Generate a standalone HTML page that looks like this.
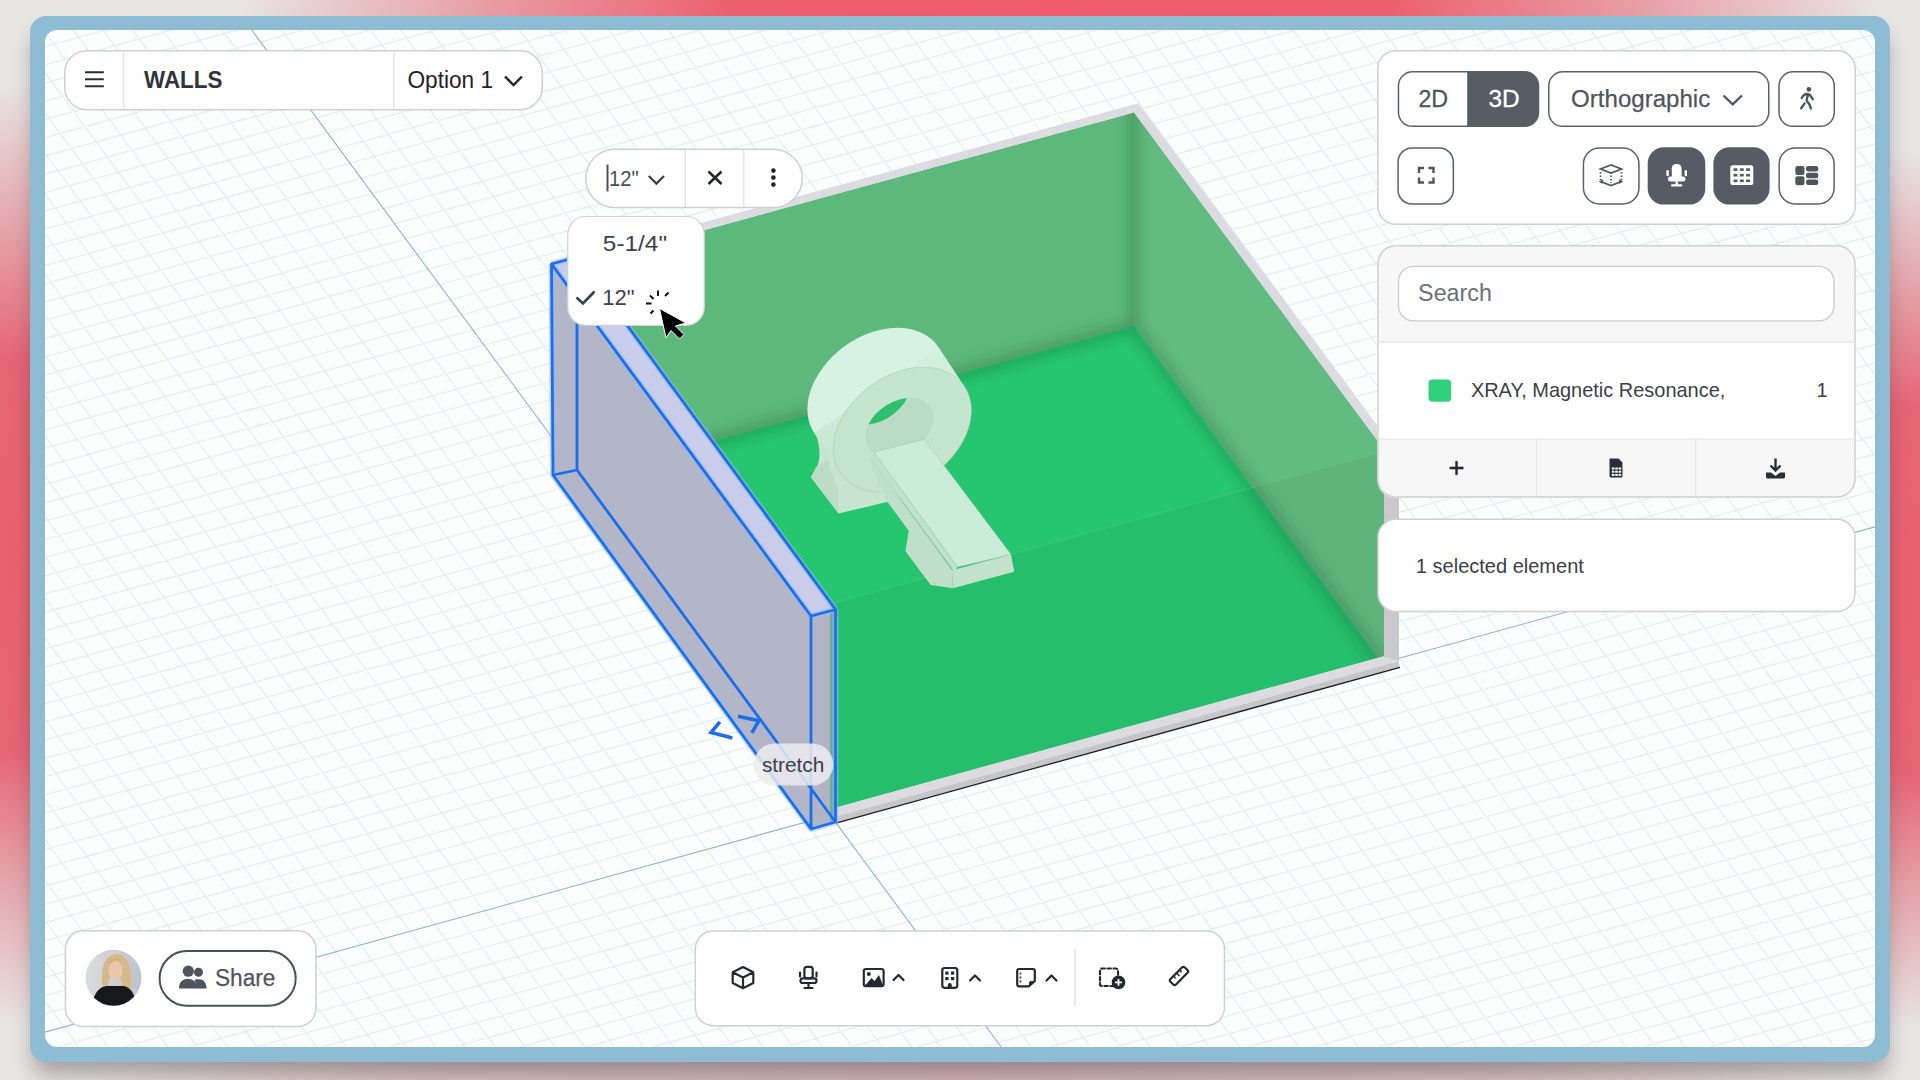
<!DOCTYPE html>
<html><head><meta charset="utf-8">
<style>
*{box-sizing:border-box;margin:0;padding:0}
html,body{width:1920px;height:1080px;overflow:hidden}
body{font-family:"Liberation Sans",sans-serif;position:relative;
background:radial-gradient(ellipse 820px 320px at 1060px 0px, #ef5b6c 0%, #ec606f 40%, #e8a2a9 72%, rgba(232,229,227,0) 100%),radial-gradient(ellipse 270px 470px at 0px 555px, #e9606f 0%, #e76676 42%, #e5a6ac 70%, rgba(232,229,227,0) 100%),radial-gradient(ellipse 260px 440px at 1920px 590px, #e9606f 0%, #e76676 42%, #e5a6ac 70%, rgba(232,229,227,0) 100%),radial-gradient(ellipse 900px 160px at 960px 1080px, #d6b8ba 0%, #dac6c6 60%, rgba(232,229,227,0) 100%),#e8e5e3;}
.frame{position:absolute;left:30px;top:16px;width:1860px;height:1046px;border-radius:16px;background:#8ebcd3;
box-shadow:0 16px 22px -4px rgba(30,20,20,.34)}
.inner{position:absolute;left:45px;top:30px;width:1830px;height:1017px;border-radius:12px;background:#fcfefe;overflow:hidden}
svg.scene{position:absolute;left:0;top:0}
.panel{position:absolute;background:#fff;border:1.5px solid #d2d2d2;border-radius:18px}
.txt{position:absolute;white-space:nowrap;line-height:1}
</style></head><body>
<div class="frame"></div>
<div class="inner"></div>
<svg class="scene" width="1920" height="1080" viewBox="0 0 1920 1080">
<defs>
<clipPath id="clipIn"><rect x="45" y="30" width="1830" height="1017" rx="12"/></clipPath>
</defs>
<g clip-path="url(#clipIn)">
<path d="M45 46.6L105.3 30M45 64.9L171.4 30M45 83.1L237.4 30M45 101.4L303.5 30M45 119.6L369.6 30M45 137.9L435.7 30M45 156.1L501.8 30M45 174.4L567.9 30M45 192.6L634.0 30M45 210.9L700.1 30M45 229.1L766.2 30M45 247.4L832.3 30M45 265.6L898.4 30M45 283.9L964.5 30M45 302.1L1030.6 30M45 320.4L1096.7 30M45 338.6L1162.8 30M45 356.9L1228.9 30M45 375.1L1295.0 30M45 393.4L1361.1 30M45 411.6L1427.2 30M45 429.9L1493.3 30M45 448.1L1559.4 30M45 466.4L1625.5 30M45 484.6L1691.6 30M45 502.9L1757.7 30M45 521.1L1823.8 30M45 539.4L1875 34.1M45 557.6L1875 52.4M45 575.9L1875 70.6M45 594.1L1875 88.9M45 612.4L1875 107.1M45 630.6L1875 125.4M45 648.9L1875 143.6M45 667.1L1875 161.9M45 685.4L1875 180.1M45 703.6L1875 198.4M45 721.9L1875 216.6M45 740.1L1875 234.9M45 758.4L1875 253.1M45 776.6L1875 271.4M45 794.9L1875 289.6M45 813.1L1875 307.9M45 831.4L1875 326.1M45 849.6L1875 344.4M45 867.9L1875 362.6M45 886.1L1875 380.9M45 904.4L1875 399.1M45 922.6L1875 417.4M45 940.9L1875 435.6M45 959.1L1875 453.9M45 977.4L1875 472.1M45 995.6L1875 490.4M45 1013.9L1875 508.6M57.3 1047L1875 545.1M123.4 1047L1875 563.4M189.5 1047L1875 581.6M255.6 1047L1875 599.9M321.7 1047L1875 618.1M387.8 1047L1875 636.4M453.9 1047L1875 654.6M520.0 1047L1875 672.9M586.1 1047L1875 691.1M652.2 1047L1875 709.4M718.3 1047L1875 727.6M784.4 1047L1875 745.9M850.5 1047L1875 764.1M916.6 1047L1875 782.4M982.7 1047L1875 800.6M1048.7 1047L1875 818.9M1114.8 1047L1875 837.1M1180.9 1047L1875 855.4M1247.0 1047L1875 873.6M1313.1 1047L1875 891.9M1379.2 1047L1875 910.1M1445.3 1047L1875 928.4M1511.4 1047L1875 946.6M1577.5 1047L1875 964.9M1643.6 1047L1875 983.1M1709.7 1047L1875 1001.4M1775.8 1047L1875 1019.6M1841.9 1047L1875 1037.9M45 1041.7L48.9 1047M45 1001.3L78.7 1047M45 961.0L108.4 1047M45 920.6L138.2 1047M45 880.2L167.9 1047M45 839.8L197.7 1047M45 799.4L227.5 1047M45 759.0L257.2 1047M45 718.6L287.0 1047M45 678.3L316.7 1047M45 637.9L346.5 1047M45 597.5L376.3 1047M45 557.1L406.0 1047M45 516.7L435.8 1047M45 476.3L465.5 1047M45 436.0L495.3 1047M45 395.6L525.1 1047M45 355.2L554.8 1047M45 314.8L584.6 1047M45 274.4L614.3 1047M45 234.0L644.1 1047M45 193.7L673.9 1047M45 153.3L703.6 1047M45 112.9L733.4 1047M45 72.5L763.1 1047M45 32.1L792.9 1047M73.2 30L822.7 1047M103.0 30L852.4 1047M132.7 30L882.2 1047M162.5 30L911.9 1047M192.2 30L941.7 1047M222.0 30L971.5 1047M281.5 30L1031.0 1047M311.3 30L1060.7 1047M341.0 30L1090.5 1047M370.8 30L1120.3 1047M400.6 30L1150.0 1047M430.3 30L1179.8 1047M460.1 30L1209.5 1047M489.8 30L1239.3 1047M519.6 30L1269.1 1047M549.4 30L1298.8 1047M579.1 30L1328.6 1047M608.9 30L1358.3 1047M638.6 30L1388.1 1047M668.4 30L1417.9 1047M698.2 30L1447.6 1047M727.9 30L1477.4 1047M757.7 30L1507.1 1047M787.4 30L1536.9 1047M817.2 30L1566.7 1047M847.0 30L1596.4 1047M876.7 30L1626.2 1047M906.5 30L1655.9 1047M936.2 30L1685.7 1047M966.0 30L1715.5 1047M995.8 30L1745.2 1047M1025.5 30L1775.0 1047M1055.3 30L1804.7 1047M1085.0 30L1834.5 1047M1114.8 30L1864.3 1047M1144.6 30L1875 1021.2M1174.3 30L1875 980.8M1204.1 30L1875 940.4M1233.8 30L1875 900.0M1263.6 30L1875 859.7M1293.4 30L1875 819.3M1323.1 30L1875 778.9M1352.9 30L1875 738.5M1382.6 30L1875 698.1M1412.4 30L1875 657.7M1442.2 30L1875 617.4M1471.9 30L1875 577.0M1501.7 30L1875 536.6M1531.4 30L1875 496.2M1561.2 30L1875 455.8M1591.0 30L1875 415.4M1620.7 30L1875 375.1M1650.5 30L1875 334.7M1680.2 30L1875 294.3M1710.0 30L1875 253.9M1739.8 30L1875 213.5M1769.5 30L1875 173.1M1799.3 30L1875 132.7M1829.0 30L1875 92.4M1858.8 30L1875 52.0" stroke="#e7f0f0" stroke-width="1.5" fill="none"/>
<path d="M45 1032.1L1875 526.9M251.8 30L1001.2 1047" stroke="#93b3bd" stroke-width="1.1" fill="none"/>
</g>

<defs>
<filter id="aoBlur" x="-20%" y="-20%" width="140%" height="140%"><feGaussianBlur stdDeviation="7"/></filter><filter id="aoBlur2" x="-50%" y="-20%" width="200%" height="140%"><feGaussianBlur stdDeviation="16"/></filter>
<clipPath id="interiorClip"><polygon points="582,263.7 1133.9,112.4 1384,449.8 1384,666.3 836,818 577,470"/></clipPath>
<linearGradient id="gBack" x1="582" y1="0" x2="1134" y2="0" gradientUnits="userSpaceOnUse">
<stop offset="0" stop-color="#5fb97d"/><stop offset="0.8" stop-color="#5db77b"/><stop offset="0.97" stop-color="#4fa46c"/><stop offset="1" stop-color="#56ad72"/>
</linearGradient>
<linearGradient id="gBackV" x1="0" y1="112" x2="0" y2="326" gradientUnits="userSpaceOnUse">
<stop offset="0" stop-color="#000" stop-opacity="0"/><stop offset="0.75" stop-color="#000" stop-opacity="0"/><stop offset="1" stop-color="#103020" stop-opacity="0.10"/>
</linearGradient>
<linearGradient id="gRight" x1="1134" y1="0" x2="1384" y2="0" gradientUnits="userSpaceOnUse">
<stop offset="0" stop-color="#54aa70"/><stop offset="0.08" stop-color="#5fb77d"/><stop offset="1" stop-color="#63bb80"/>
</linearGradient>
<linearGradient id="gFloor" x1="0" y1="326" x2="0" y2="820" gradientUnits="userSpaceOnUse">
<stop offset="0" stop-color="#23bb67"/><stop offset="0.12" stop-color="#27c771"/><stop offset="1" stop-color="#22c06a"/>
</linearGradient>
</defs>
<g clip-path="url(#clipIn)">
<!-- floor -->
<polygon points="577,300 1133.9,112 1384,449 1386,660 836,812 577,470" fill="#26c670"/>
<!-- back-left wall inner face -->
<polygon points="582,263.7 1133.9,112.4 1133.9,326 582,477.2" fill="#5db87b"/>
<!-- right wall inner face -->
<polygon points="1133.9,112.4 1384,449.8 1384,666.3 1133.9,326" fill="#62bb80"/>
<!-- AO -->
<g clip-path="url(#interiorClip)" filter="url(#aoBlur)">
<path d="M1133.9,100 L1133.9,326 M560,483 L1133.9,326 L1384,666" stroke="#0e3a1e" stroke-opacity="0.30" stroke-width="9" fill="none"/>
</g>
<g clip-path="url(#interiorClip)" filter="url(#aoBlur2)">
<path d="M1133.9,100 L1133.9,326" stroke="#0e3a1e" stroke-opacity="0.16" stroke-width="30" fill="none"/>
</g>
<!-- front transparent wall tint -->
<polygon points="836,602.5 1384,451.3 1384,666.3 836,818" fill="#2a4a30" fill-opacity="0.06"/>
<line x1="836" y1="602.5" x2="1384" y2="451.3" stroke="#6fd08f" stroke-opacity="0.3" stroke-width="1.2"/>
<!-- wall tops -->
<polygon points="551.5,264 1138.3,103.3 1133.9,112.4 582,263.7" fill="#dcdbe1"/>
<polygon points="1138.3,103.3 1399,455 1384,449.8 1133.9,112.4" fill="#dcdbe1"/>
<!-- right wall end face -->
<polygon points="1384,449.8 1399,455 1399,661.5 1384,656.3" fill="#c9c8cc"/>
<!-- floor slab -->
<polygon points="836,807.4 1383.7,656.3 1398.5,661.5 1400,667.4 836,823.1" fill="#c6c6c9"/>
<polygon points="836,807.4 1383.7,656.3 1398.5,661.5 836,816.8" fill="#dcdce0"/>
<line x1="836" y1="823.1" x2="1400" y2="667.4" stroke="#1e1e1e" stroke-width="1.3"/>
</g>

<defs>
<linearGradient id="gRing" x1="0" y1="330" x2="0" y2="500" gradientUnits="userSpaceOnUse">
<stop offset="0" stop-color="#d6f2e0"/><stop offset="0.5" stop-color="#cdebd6"/><stop offset="1" stop-color="#c2e2cb"/>
</linearGradient>
<clipPath id="holeClip"><ellipse cx="0" cy="0" rx="1" ry="1" transform="matrix(34.2,-9.45,0,28,899.6,427.4)"/></clipPath>
</defs>
<g id="mri">
<!-- base -->
<path d="M815,432 C820,444 821,458 817,467 L811,477.2 L838.6,513.5 L888.2,501.7 L900,497 L885,470 L840,440 Z" fill="#c7e5d0"/>
<path d="M811,477.2 L838.6,513.5 L839,490 C834,480 830,470 828,460 L816,467 Z" fill="#bddcc6"/>
<!-- ring side (hull) -->
<ellipse cx="0" cy="0" rx="1" ry="1" transform="matrix(69,-19.04,0,59.4,876.4,390.2)" fill="url(#gRing)"/>
<polygon points="840.2,472.5 964.6,386.7 938.6,347.3 814.2,433.1" fill="url(#gRing)"/>
<!-- front face -->
<ellipse cx="0" cy="0" rx="1" ry="1" transform="matrix(69,-19.04,0,59.4,902.4,429.6)" fill="#c6e5cf"/>
<ellipse cx="0" cy="0" rx="1" ry="1" transform="matrix(69,-19.04,0,59.4,902.4,429.6)" fill="none" stroke="#a9c9b3" stroke-width="1" vector-effect="non-scaling-stroke" stroke-opacity="0.6"/>
<!-- hole -->
<ellipse cx="0" cy="0" rx="1" ry="1" transform="matrix(34.2,-9.45,0,28,899.6,427.4)" fill="#bcdbc5"/>
<g clip-path="url(#holeClip)">
<ellipse cx="0" cy="0" rx="1" ry="1" transform="matrix(34.2,-9.45,0,28,876,395)" fill="#2fc06e"/>
</g>
<!-- table pedestal/side -->
<polygon points="870.9,459.1 952,570 952.8,588.3 930.7,585.1 905.5,551.3 908.7,530.8 887.4,501.7 872,470" fill="#bfdfc8"/>
<!-- table top -->
<polygon points="874,452 924.4,439.4 1011,554.4 957.5,567" fill="#cbecd7"/>
<polygon points="870.9,459.1 874,452 957.5,567 954.3,571.7" fill="#c0e1ca"/>
<!-- table front -->
<polygon points="952,570.2 1011,554.4 1014.2,571.7 952.8,588.3" fill="#c2e2cc"/>
<path d="M874,452 L924.4,439.4 L1011,554.4 L957.5,567 Z M954.3,571.7 L870.9,459.1" fill="none" stroke="#a8c8b2" stroke-width="0.8" stroke-opacity="0.7"/>
</g>

<g clip-path="url(#clipIn)">
<!-- selected left wall -->
<polygon points="551.5,264 811,616 811,829 553,475" fill="#b3b5c8"/>
<polygon points="551.5,264 577,257 835.5,609.5 811,616" fill="#cacdea"/>
<polygon points="811,616 835.5,609.5 835.5,822 811,829" fill="#b2b4c6"/>
<polygon points="830,611 835.5,609.5 835.5,822 830,823.5" fill="#3aa86a" fill-opacity="0.6"/>
<!-- halo -->
<path d="M551.5,264 L811,616 L835.5,609.5 M551.5,264 L553,475 L811,829 L835.5,822 L835.5,609.5 M551.5,264 L577,257 L835.5,609.5" stroke="#8fbaf5" stroke-opacity="0.55" stroke-width="6" fill="none" stroke-linejoin="round"/>
<!-- blue edges -->
<path d="M551.5,264 L577,257 L835.5,609.5 L811,616 Z M811,616 L811,829 M835.5,609.5 L835.5,822 M551.5,264 L553,475 L811,829 L835.5,822 M577,257 L577,470 L835.5,822 M553,475 L577,470" stroke="#1b6fe9" stroke-width="2.8" fill="none" stroke-linejoin="round"/>
<!-- chevrons -->
<path d="M719.9,721.8 L711.1,732.4 L732.4,738" stroke="#1b6fe9" stroke-width="3.6" fill="none" stroke-linejoin="miter"/>
<path d="M738,716.2 L758.8,720.8 L751.9,732.9" stroke="#1b6fe9" stroke-width="3.6" fill="none" stroke-linejoin="miter"/>
</g>
</svg>

<svg class="scene" width="1920" height="1080" viewBox="0 0 1920 1080" font-family="Liberation Sans, sans-serif">
<!-- top-left bar -->
<rect x="64.75" y="50.75" width="477.5" height="59" rx="22" fill="#fff" stroke="#cfcfcf" stroke-width="1.5"/>
<line x1="123.5" y1="51.5" x2="123.5" y2="109" stroke="#e2e2e2" stroke-width="1.2"/>
<line x1="393.7" y1="51.5" x2="393.7" y2="109" stroke="#e2e2e2" stroke-width="1.2"/>
<path d="M85,72.3H103.8M85,79.3H103.8M85,86.3H103.8" stroke="#2b2f34" stroke-width="2"/>
<text x="144.0" y="87.8" font-size="24.06" font-weight="bold" fill="#30343a" textLength="78.33" lengthAdjust="spacingAndGlyphs">WALLS</text>
<text x="407.52" y="87.6" font-size="23.04" fill="#1f2328" textLength="85.54" lengthAdjust="spacingAndGlyphs">Option 1</text>
<path d="M505,76.5 L513.5,85 L522,76.5" stroke="#1f2328" stroke-width="2.4" fill="none"/>

<!-- wall thickness pill -->
<rect x="585.75" y="149.25" width="216.5" height="58.3" rx="29.1" fill="#fff" stroke="#cfcfcf" stroke-width="1.5"/>
<line x1="685.4" y1="150" x2="685.4" y2="207" stroke="#dedede" stroke-width="1.2"/>
<line x1="743.8" y1="150" x2="743.8" y2="207" stroke="#dedede" stroke-width="1.2"/>
<line x1="607.5" y1="164.5" x2="607.5" y2="191.5" stroke="#4d5258" stroke-width="2"/>
<text x="609.07" y="185.5" font-size="21.74" fill="#4a4f57" textLength="29.75" lengthAdjust="spacingAndGlyphs">12"</text>
<path d="M648.8,176 L656.4,183.6 L664,176" stroke="#3b4047" stroke-width="2.3" fill="none"/>
<path d="M708.5,171.5 L721.5,184 M721.5,171.5 L708.5,184" stroke="#22262b" stroke-width="2.6"/>
<circle cx="773.4" cy="170.6" r="2.3" fill="#22262b"/><circle cx="773.4" cy="177.6" r="2.3" fill="#22262b"/><circle cx="773.4" cy="184.6" r="2.3" fill="#22262b"/>

<!-- dropdown -->
<rect x="567.75" y="216.5" width="136.5" height="108.8" rx="18" fill="#fff" stroke="#d2d2d2" stroke-width="1.2"/>
<text x="602.86" y="250.7" font-size="21.45" fill="#3d4249" textLength="64.19" lengthAdjust="spacingAndGlyphs">5-1/4"</text>
<path d="M576.5,297.5 L583,303.5 L594.5,291.5" stroke="#3a3f45" stroke-width="2.6" fill="none"/>
<text x="602.29" y="305" font-size="21.74" fill="#3d4249" textLength="32.3" lengthAdjust="spacingAndGlyphs">12"</text>
<!-- cursor -->
<path d="M659.5,308.5 L686,323 L675.5,326 L684,334.5 L679.5,339 L671,330.5 L666,338 Z" fill="#000" stroke="#fff" stroke-width="1"/>
<path d="M658,290.5 L658,296 M646,303.5 L651.5,303.5 M650,295.5 L653.5,299 M665,296 L668.5,292.5 M650.5,313.5 L653.5,310.5" stroke="#000" stroke-width="1.8"/>

<!-- stretch label -->
<rect x="753.7" y="743.5" width="79.6" height="42" rx="21" fill="#ececf0" fill-opacity="0.85"/>
<text x="761.9" y="771.7" font-size="19.44" fill="#3d4148" textLength="62.44" lengthAdjust="spacingAndGlyphs">stretch</text>

<!-- right top panel -->
<rect x="1377.75" y="50.75" width="477.5" height="173.5" rx="18" fill="#fff" stroke="#d0d0d0" stroke-width="1.5"/>
<path d="M1467.2,71.8 H1525 a14,14 0 0 1 14,14 V112.5 a14,14 0 0 1 -14,14 H1467.2 Z" fill="#575c65"/>
<rect x="1398.45" y="71.85" width="140.1" height="54.5" rx="14" fill="none" stroke="#5b6068" stroke-width="1.5"/>
<text x="1418.45" y="106.9" font-size="24.49" fill="#50555c" textLength="29.69" lengthAdjust="spacingAndGlyphs" stroke="#50555c" stroke-width="0.3">2D</text>
<text x="1488.5" y="106.9" font-size="24.49" fill="#ffffff" textLength="31.2" lengthAdjust="spacingAndGlyphs" stroke="#ffffff" stroke-width="0.3">3D</text>
<rect x="1548.75" y="71.85" width="220" height="54.5" rx="14" fill="#fff" stroke="#5b6068" stroke-width="1.5"/>
<text x="1571.09" y="107" font-size="23.91" fill="#50555c" textLength="139.11" lengthAdjust="spacingAndGlyphs" stroke="#50555c" stroke-width="0.25">Orthographic</text>
<path d="M1723.5,95.5 L1732.7,104.3 L1742,95.5" stroke="#50555c" stroke-width="2.3" fill="none"/>
<rect x="1779" y="71.85" width="55.3" height="54.5" rx="14" fill="#fff" stroke="#5b6068" stroke-width="1.5"/>
<!-- walk icon -->
<g stroke="#50555c" stroke-width="2.4" fill="none" stroke-linecap="round" stroke-linejoin="round">
<circle cx="1808.9" cy="89.3" r="1.2" fill="#50555c"/>
<path d="M1801.8,98 C1803,95.2 1805,94 1807.6,94 C1809.6,94.2 1811,96 1812.8,99.2"/>
<path d="M1807.8,95 C1807.5,97 1806.8,99 1806.6,100.6 C1808.5,102.5 1810,104.5 1810.9,108.6"/>
<path d="M1804.6,103.4 L1801.2,108.2"/>
</g>
<rect x="1398.05" y="148" width="55.3" height="56" rx="14" fill="#fff" stroke="#5b6068" stroke-width="1.5"/>
<path d="M1419,173 V168 H1424 M1428.5,168 H1433.5 V173 M1433.5,177.5 V182.5 H1428.5 M1424,182.5 H1419 V177.5" stroke="#50555c" stroke-width="2.4" fill="none"/>
<rect x="1583.45" y="148" width="55.5" height="56" rx="16" fill="#fff" stroke="#5b6068" stroke-width="1.5"/>
<g stroke="#50555c" stroke-width="1.7" fill="none">
<path d="M1600.5,169 L1611,165 L1621.5,169 L1611,173 Z"/>
<path d="M1600.5,181.5 L1611,185.5 L1621.5,181.5" />
<path d="M1600.5,172 V180 M1621.5,172 V180 M1611,175.5 V183" stroke-dasharray="1.6 1.8"/>
<path d="M1603,180 L1600.5,181.5 L1603,183 M1619,180 L1621.5,181.5 L1619,183"/>
</g>
<rect x="1647.7" y="147.3" width="57.6" height="57.3" rx="16" fill="#565b64"/>
<g fill="#fff">
<path d="M1671.8,177 V168.5 a4.5,4.5 0 0 1 4.5,-4.5 h0.8 a4.5,4.5 0 0 1 4.5,4.5 V177 Z"/>
<rect x="1666.4" y="170" width="2.4" height="6.2" rx="1.2"/>
<rect x="1684.6" y="170" width="2.4" height="6.2" rx="1.2"/>
<rect x="1668" y="176.6" width="17.4" height="5" rx="2.5"/>
<rect x="1675.5" y="181.5" width="2.4" height="3.5"/>
<rect x="1671" y="184.3" width="11.4" height="2.3" rx="1.1"/>
</g>
<rect x="1713.4" y="147.3" width="56.2" height="57.3" rx="16" fill="#565b64"/>
<rect x="1730.3" y="165.3" width="23" height="19.7" rx="2.5" fill="#fff"/>
<g fill="#565b64">
<rect x="1733.5" y="168.3" width="4" height="2.6"/><rect x="1739.8" y="168.3" width="4" height="2.6"/><rect x="1746.1" y="168.3" width="4" height="2.6"/>
<rect x="1733.5" y="173.9" width="4" height="2.6"/><rect x="1739.8" y="173.9" width="4" height="2.6"/><rect x="1746.1" y="173.9" width="4" height="2.6"/>
<rect x="1733.5" y="179.5" width="4" height="2.6"/><rect x="1739.8" y="179.5" width="4" height="2.6"/><rect x="1746.1" y="179.5" width="4" height="2.6"/>
</g>
<rect x="1779.15" y="148" width="55" height="56" rx="16" fill="#fff" stroke="#5b6068" stroke-width="1.5"/>
<g fill="#50555c">
<rect x="1795.3" y="166" width="9.2" height="9" rx="2.2"/>
<rect x="1795.3" y="176.3" width="9.2" height="9" rx="2.2"/>
<rect x="1806" y="166" width="12.3" height="5.4" rx="2.2"/>
<rect x="1806" y="172.8" width="12.3" height="5.4" rx="2.2"/>
<rect x="1806" y="179.6" width="12.3" height="5.4" rx="2.2"/>
</g>

<!-- search panel -->
<clipPath id="spClip"><rect x="1377.2" y="245" width="478.4" height="252.8" rx="18"/></clipPath>
<g clip-path="url(#spClip)">
<rect x="1377.2" y="245" width="478.4" height="252.8" fill="#f7f7f7"/>
<rect x="1377.2" y="342.2" width="478.4" height="96.8" fill="#fff"/>
</g>
<rect x="1377.95" y="245.75" width="477" height="251.3" rx="18" fill="none" stroke="#d0d0d0" stroke-width="1.5"/>
<line x1="1378" y1="342.2" x2="1855" y2="342.2" stroke="#e4e4e4" stroke-width="1.2"/>
<line x1="1378" y1="439" x2="1855" y2="439" stroke="#e4e4e4" stroke-width="1.2"/>
<line x1="1536.8" y1="439" x2="1536.8" y2="497" stroke="#e4e4e4" stroke-width="1.2"/>
<line x1="1695.6" y1="439" x2="1695.6" y2="497" stroke="#e4e4e4" stroke-width="1.2"/>
<rect x="1398.5" y="266.4" width="435.4" height="54.5" rx="15" fill="#fff" stroke="#cdcdcd" stroke-width="1.4"/>
<text x="1418.12" y="301.3" font-size="23.77" fill="#6b7078" textLength="73.72" lengthAdjust="spacingAndGlyphs">Search</text>
<rect x="1428.5" y="379.4" width="22.7" height="22.4" rx="4" fill="#2fd27b"/>
<text x="1470.9" y="397.1" font-size="20.43" fill="#3a3f46" textLength="254.41" lengthAdjust="spacingAndGlyphs">XRAY, Magnetic Resonance,</text>
<text x="1816.5" y="396.9" font-size="20" fill="#3a3f46">1</text>
<path d="M1449.5,468 H1463.5 M1456.5,461 V475" stroke="#25292e" stroke-width="2.4"/>
<path d="M1609.5,458.5 H1618.5 L1622.5,462.5 V476 a1.5,1.5 0 0 1 -1.5,1.5 H1611 a1.5,1.5 0 0 1 -1.5,-1.5 Z" fill="#2b2f35"/>
<g fill="#fff"><rect x="1611.8" y="467.5" width="2.6" height="2"/><rect x="1615.2" y="467.5" width="2.6" height="2"/><rect x="1618.6" y="467.5" width="2.6" height="2"/>
<rect x="1611.8" y="470.7" width="2.6" height="2"/><rect x="1615.2" y="470.7" width="2.6" height="2"/><rect x="1618.6" y="470.7" width="2.6" height="2"/>
<rect x="1611.8" y="473.9" width="2.6" height="2"/><rect x="1615.2" y="473.9" width="2.6" height="2"/><rect x="1618.6" y="473.9" width="2.6" height="2"/></g>
<path d="M1775.5,458.5 V470 M1770.5,465.5 L1775.5,470.5 L1780.5,465.5" stroke="#2b2f35" stroke-width="2.4" fill="none"/>
<path d="M1766,472.5 H1771 L1775.5,476 L1780,472.5 H1785 V477 a1.5,1.5 0 0 1 -1.5,1.5 H1767.5 a1.5,1.5 0 0 1 -1.5,-1.5 Z" fill="#2b2f35"/>

<!-- selected panel -->
<rect x="1377.95" y="519.15" width="477" height="92.4" rx="18" fill="#fff" stroke="#d0d0d0" stroke-width="1.5"/>
<text x="1415.89" y="572.6" font-size="19.86" fill="#3a3f46" textLength="167.98" lengthAdjust="spacingAndGlyphs">1 selected element</text>

<!-- bottom-left panel -->
<rect x="65.45" y="930.85" width="250.4" height="95.6" rx="18" fill="#fff" stroke="#d0d0d0" stroke-width="1.5"/>
<clipPath id="avClip"><circle cx="113.5" cy="977.8" r="28"/></clipPath>
<g clip-path="url(#avClip)">
<defs><linearGradient id="avBg" x1="85" y1="0" x2="142" y2="0" gradientUnits="userSpaceOnUse"><stop offset="0" stop-color="#dcdcdc"/><stop offset="1" stop-color="#bcc3cc"/></linearGradient></defs>
<rect x="85" y="949" width="57" height="57" fill="url(#avBg)"/>
<path d="M103,990 C100,972 103,955 116,954 C129,954 133,970 131,993 L123,993 C123,984 121,978 118,975 L110,977 C108,982 108,986 108,991 Z" fill="#d5b98a"/>
<ellipse cx="115.5" cy="970.5" rx="7" ry="9.5" fill="#e8c7ae"/>
<path d="M110,962 C112,958 120,957 123,963 C121,959 114,959 110,964 Z" fill="#cfae7c"/>
<path d="M92,1008 C93,993 99,987 107,986 L123,986 C131,987 135,994 137,1008 Z" fill="#16181c"/>
</g>
<rect x="159.6" y="951" width="136.1" height="54.7" rx="27.3" fill="#fff" stroke="#4b5058" stroke-width="2"/>
<g fill="#50555d">
<circle cx="188.3" cy="971.2" r="5.6"/>
<circle cx="198.5" cy="972.3" r="4.5"/>
<path d="M178.9,988.6 C178.9,982.5 182.5,978.8 188,978.8 C193.5,978.8 197,982.5 197,988.6 Z"/>
<path d="M196,988.6 C196,984 195.5,981.5 194.5,979.8 C195.8,979.3 197,979.2 199,979.2 C203.5,979.2 206.6,982.5 206.6,988.6 Z"/>
</g>
<text x="215.05" y="985.6" font-size="23.77" fill="#50555d" textLength="60.32" lengthAdjust="spacingAndGlyphs" stroke="#50555d" stroke-width="0.25">Share</text>

<!-- bottom toolbar -->
<rect x="695.35" y="930.95" width="529.1" height="94.7" rx="18" fill="#fff" stroke="#d0d0d0" stroke-width="1.5"/>
<line x1="1074.9" y1="949" x2="1074.9" y2="1006" stroke="#e2e2e2" stroke-width="1.4"/>
<g stroke="#25292e" stroke-width="2.2" fill="none" stroke-linejoin="round" stroke-linecap="round">
<path d="M743,967 L753.3,972.3 V983 L743,988.3 L732.7,983 V972.3 Z M732.7,972.3 L743,977.5 L753.3,972.3 M743,977.5 V988.3"/>
<rect x="804.4" y="966.8" width="8.3" height="11.5" rx="2.5"/>
<path d="M800,972.5 V976.5 M816.5,972.5 V976.5"/>
<rect x="800.5" y="978.3" width="16" height="4.7" rx="2.3"/>
<path d="M808.5,983 V988 M804.5,988 H812.5"/>
<rect x="863.8" y="969" width="19.8" height="17.2" rx="2.2"/>
<path d="M893.5,980 L898.5,975 L903.5,980"/>
<rect x="942.3" y="968" width="15" height="19.8" rx="2.2"/>
<path d="M970,980.5 L975,975.5 L980,980.5"/>
<path d="M1019,969 H1033 a1.8,1.8 0 0 1 1.8,1.8 V981 L1029,986.3 H1019 a1.8,1.8 0 0 1 -1.8,-1.8 V970.8 a1.8,1.8 0 0 1 1.8,-1.8 Z"/>
<path d="M1046.5,980.5 L1051.5,975.5 L1056.5,980.5"/>
<path d="M1114,986 H1102 a2,2 0 0 1 -2,-2 V970.5 a2,2 0 0 1 2,-2 H1116 a2,2 0 0 1 2,2 V976" stroke-dasharray="3.5 2.6"/>
<path d="M1170.5,979 L1182,967.5 a2,2 0 0 1 2.8,0 L1187.5,970 a2,2 0 0 1 0,2.8 L1176,984.5 a2,2 0 0 1 -2.8,0 L1170.5,981.8 a2,2 0 0 1 0,-2.8 Z"/>
<path d="M1176.5,973 L1179,975.5 M1179.5,970 L1181.2,971.7 M1173.5,976 L1175.2,977.7" stroke-width="1.6"/>
</g>
<g fill="#25292e">
<circle cx="868.8" cy="974" r="2"/>
<path d="M865,985.5 L871.5,978 L874.5,981 L879,975 L883,985.5 Z"/>
<rect x="945.3" y="971.5" width="3.2" height="3.2"/><rect x="951" y="971.5" width="3.2" height="3.2"/>
<rect x="945.3" y="977" width="3.2" height="3.2"/><rect x="951" y="977" width="3.2" height="3.2"/>
<path d="M947.8,987.5 V985 a2,2 0 0 1 4,0 V987.5 Z"/>
<path d="M1029,986.3 V983 a2,2 0 0 1 2,-2 H1034.8 Z"/>
<circle cx="1020.5" cy="973.5" r="1"/><circle cx="1020.5" cy="977.5" r="1"/><circle cx="1020.5" cy="981.5" r="1"/>
<circle cx="1118.5" cy="982.4" r="6.8"/>
</g>
<path d="M1118.5,979 V985.8 M1115.1,982.4 H1121.9" stroke="#fff" stroke-width="1.8"/>
</svg>
</body></html>
